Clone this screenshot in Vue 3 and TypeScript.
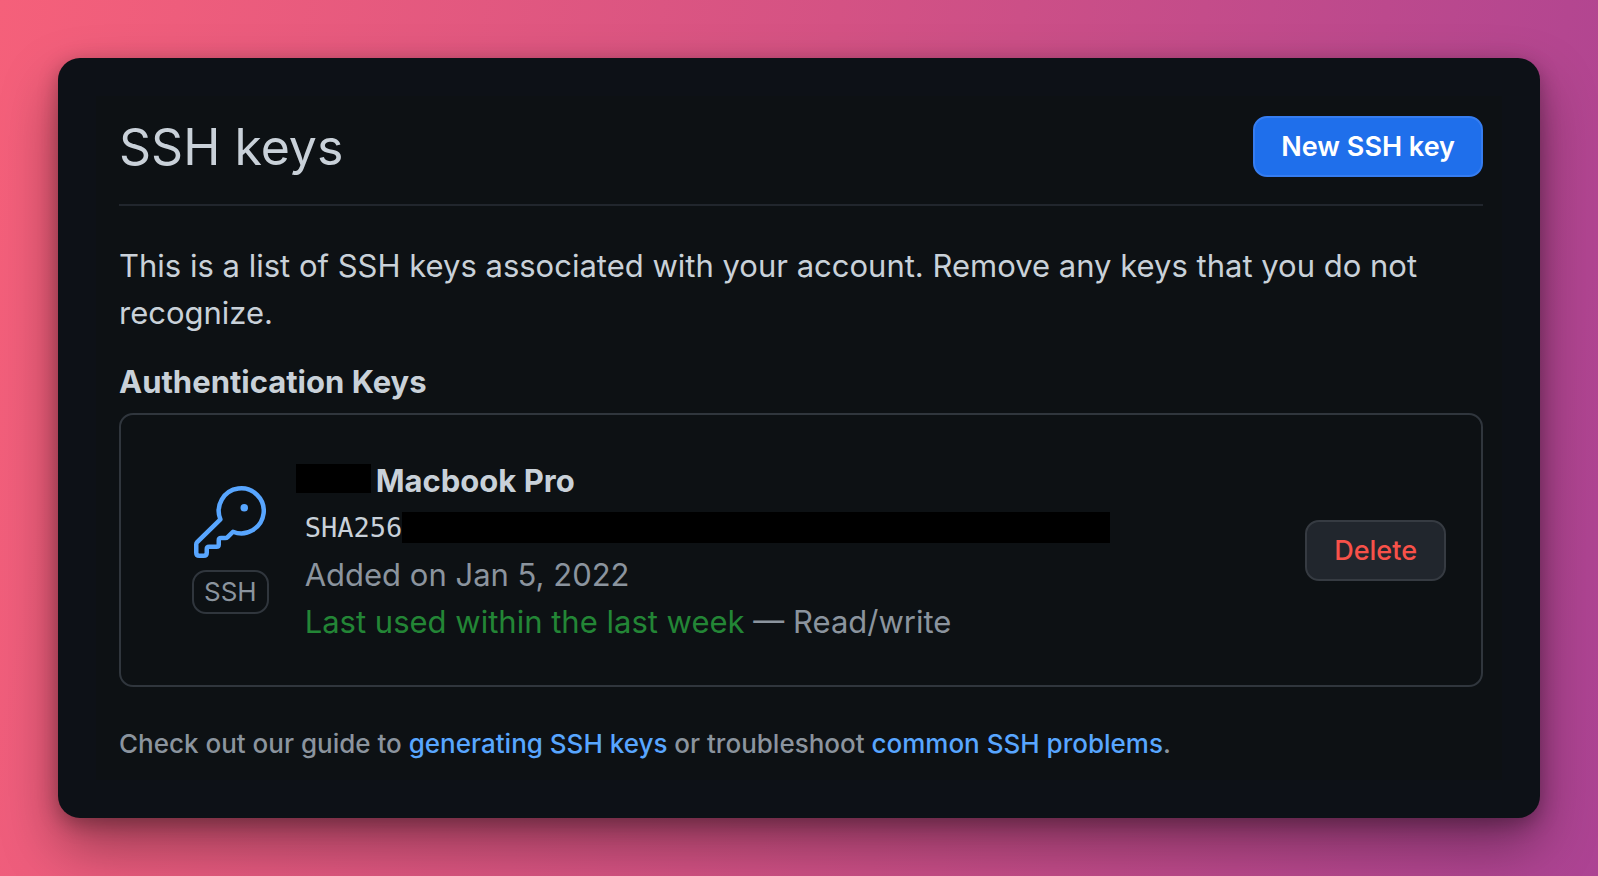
<script setup lang="ts">
interface SshKey {
  id: number
  device: string
  algorithm: string
  added: string
  lastUsed: string
  access: string
}

const keys: SshKey[] = [
  {
    id: 1,
    device: 'Macbook Pro',
    algorithm: 'SHA256',
    added: 'Added on Jan 5, 2022',
    lastUsed: 'Last used within the last week',
    access: 'Read/write',
  },
]
</script>

<template>
  <div class="backdrop">
    <main class="window">
      <div class="panel">
        <header class="header">
          <h1 class="title">SSH keys</h1>
          <button type="button" class="btn btn-primary">New SSH key</button>
        </header>

        <p class="intro">
          This is a list of SSH keys associated with your account. Remove any keys that you do not
          recognize.
        </p>

        <h2 class="subtitle">Authentication Keys</h2>
        <ul class="keys">
          <li v-for="key in keys" :key="key.id" class="key">
            <div class="kind">
              <svg class="key-icon" viewBox="0 0 24 24" aria-hidden="true">
                <path
                  d="M8.8 11.1A7.5 7.5 0 1 1 13 15.25L11.2 17.05Q10.9 17.35 10.4 17.35H9Q8.25 17.35 8.25 18.1V19.5Q8.25 20.25 7.5 20.25H5Q4.25 20.25 4.25 21V22.25Q4.25 23.25 3.25 23.25H1.75Q.75 23.25 .75 22.25V19.4Q.75 19 1.05 18.7Z"
                />
                <circle cx="16.75" cy="7.25" r="1.25" />
              </svg>
              <span class="badge">SSH</span>
            </div>
            <div class="details">
              <strong class="line device"><span class="redacted redacted-name"></span>{{ key.device }}</strong>
              <code class="line print">{{ key.algorithm }}<span class="redacted redacted-print"></span></code>
              <span class="line">{{ key.added }}</span>
              <span class="line"><span class="recent">{{ key.lastUsed }}</span> — {{ key.access }}</span>
            </div>
            <button type="button" class="btn btn-danger">Delete</button>
          </li>
        </ul>

        <p class="footnote">
          Check out our guide to <a href="#generating">generating SSH keys</a> or troubleshoot
          <a href="#problems">common SSH problems</a>.
        </p>
      </div>
    </main>
  </div>
</template>

<style>
body {
  margin: 0;
}
</style>

<style scoped>
.backdrop {
  box-sizing: border-box;
  min-height: 100vh;
  padding: 58px;
  background: linear-gradient(100deg, #f5607a 0%, #d45284 48%, #ac4393 100%);
  font-family: Inter, "Liberation Sans", sans-serif;
  font-size: 31px;
  line-height: 47px;
  color: #c9d1d9;
}

.window {
  padding: 38px;
  border-radius: 22px;
  background: #0d1117;
  box-shadow: 0 28px 56px rgba(0, 0, 0, 0.36), 0 6px 20px rgba(0, 0, 0, 0.28);
}

.panel {
  padding: 20px 19px 16px 23px;
  background: #0d1114;
}

.header {
  display: flex;
  align-items: center;
  justify-content: space-between;
  padding-bottom: 27px;
  border-bottom: 2px solid #21262d;
}

.title {
  margin: 0;
  padding-top: 2px;
  font-size: 50px;
  font-weight: 400;
  line-height: 59px;
}

.btn {
  box-sizing: border-box;
  padding: 0 27px;
  border: 2px solid;
  border-radius: 14px;
  font: inherit;
  font-size: 27px;
  line-height: 57px;
  cursor: pointer;
}

.btn-primary {
  padding: 0 26px;
  background: #1f6feb;
  border-color: #367df0;
  color: #fff;
  font-weight: 600;
}

.btn-danger {
  background: #21262d;
  border-color: #363b42;
  color: #f85149;
  font-weight: 500;
}

.intro {
  margin: 36px 0 22px;
}

.subtitle {
  margin: 0 0 8px;
  font-size: 31px;
  font-weight: 650;
}

.keys {
  margin: 0;
  padding: 0;
  list-style: none;
  border: 2px solid #30363d;
  border-radius: 14px;
}

.key {
  display: flex;
  align-items: center;
  padding: 40px 35px;
}

.kind {
  display: flex;
  flex-direction: column;
  align-items: center;
  gap: 12px;
  margin: 0 36px;
}

.key-icon {
  width: 72px;
  height: 72px;
  fill: none;
  stroke: #58a6ff;
  stroke-width: 1.5;
  stroke-linejoin: round;
}

.key-icon circle {
  fill: #58a6ff;
  stroke: none;
}

.badge {
  padding: 0 10px;
  border: 2px solid #30363d;
  border-radius: 14px;
  font-size: 26px;
  line-height: 40px;
  color: #8b949e;
}

.details {
  flex: 1;
  display: flex;
  flex-direction: column;
  padding-top: 2px;
  color: #8b949e;
}

.line {
  display: flex;
  align-items: center;
  min-height: 47px;
  white-space: pre;
}

.device {
  margin-left: -9px;
  font-weight: 650;
  color: #c9d1d9;
}

.print {
  font-family: "DejaVu Sans Mono", monospace;
  font-size: 27px;
  color: #c9d1d9;
}

.redacted {
  background: #000;
}

.redacted-name {
  width: 75px;
  height: 29px;
  margin: 0 5px 4px 0;
}

.redacted-print {
  width: 708px;
  height: 31px;
}

.recent {
  color: #238636;
}

.footnote {
  margin: 37px 0 0;
  font-size: 26px;
  font-weight: 500;
  line-height: 40px;
  color: #8b949e;
}

.footnote a {
  color: #58a6ff;
  text-decoration: none;
}
</style>
